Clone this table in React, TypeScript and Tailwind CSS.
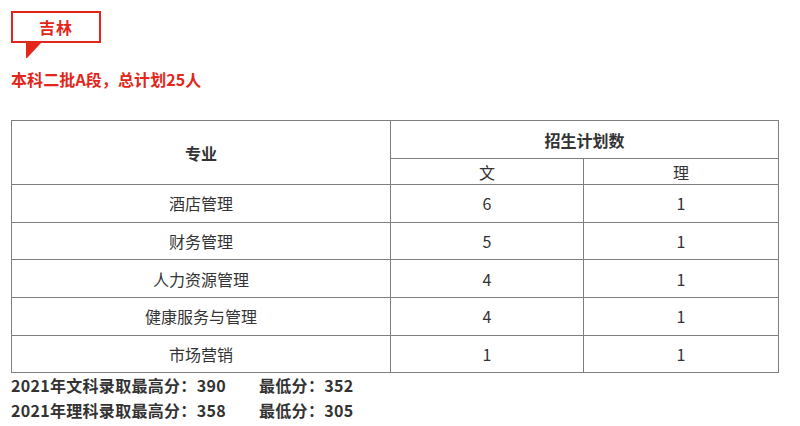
import React from 'react';

const rows: [string, number, number][] = [
  ['酒店管理', 6, 1],
  ['财务管理', 5, 1],
  ['人力资源管理', 4, 1],
  ['健康服务与管理', 4, 1],
  ['市场营销', 1, 1],
];

const font = { fontFamily: '"Noto Sans CJK SC", "Noto Sans", sans-serif' };

export default function App() {
  return (
    <main className="w-[800px] h-[426px] bg-white text-[#333]" style={font}>
      <div className="pl-[11px] pt-[11px]">
        {/* Region badge */}
        <div className="relative w-[90px] h-[32px] border-2 border-[#e2261a] flex items-center justify-center">
          <span className="text-[16px] font-bold text-[#e2261a] leading-none tracking-[1px]">吉林</span>
          <svg className="absolute left-[13px] top-[30px]" width="16" height="16" viewBox="0 0 16 16">
            <polygon points="0,0 15,0 1,15 0,15" fill="#e2261a" />
          </svg>
        </div>

        <p className="mt-[26px] text-[16px] font-bold text-[#e2261a] leading-[20px] tracking-[0.1px]">本科二批A段，总计划25人</p>

        <table className="mt-[31px] w-[768px] border-collapse text-[16px] text-[#333] text-center">
          <thead>
            <tr className="h-[38px]">
              <th rowSpan={2} className="w-[379px] border border-[#7f7f7f] font-bold">专业</th>
              <th colSpan={2} className="border border-[#7f7f7f] font-bold">招生计划数</th>
            </tr>
            <tr className="h-[26px]">
              <th className="w-[193px] border border-[#7f7f7f] font-normal">文</th>
              <th className="border border-[#7f7f7f] font-normal">理</th>
            </tr>
          </thead>
          <tbody>
            {rows.map(([name, wen, li]) => (
              <tr key={name} className="h-[37.7px]">
                <td className="border border-[#7f7f7f]">{name}</td>
                <td className="border border-[#7f7f7f]">{wen}</td>
                <td className="border border-[#7f7f7f]">{li}</td>
              </tr>
            ))}
          </tbody>
        </table>

        <div className="text-[16px] font-bold text-[#333] leading-[25px] tracking-[0.3px]">
          <div className="flex">
            <span className="w-[248px]">2021年文科录取最高分：390</span>
            <span>最低分：352</span>
          </div>
          <div className="flex">
            <span className="w-[248px]">2021年理科录取最高分：358</span>
            <span>最低分：305</span>
          </div>
        </div>
      </div>
    </main>
  );
}
